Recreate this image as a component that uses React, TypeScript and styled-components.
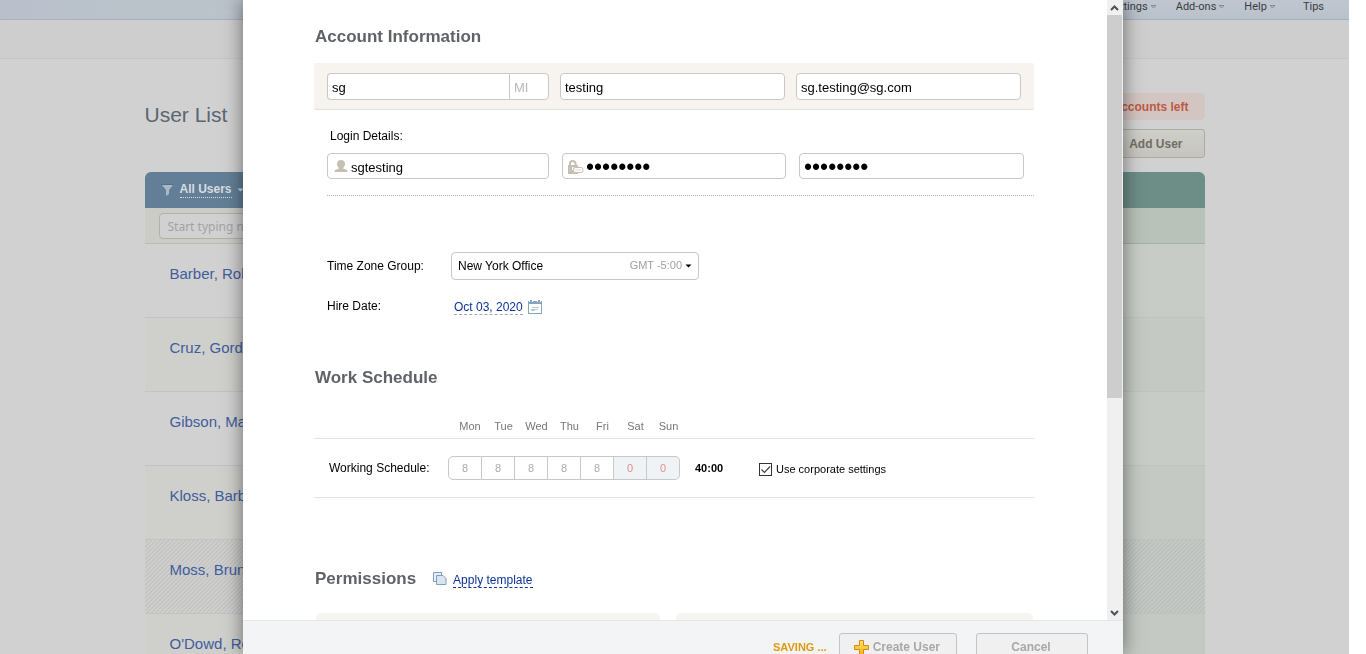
import React from 'react';
import styled, { createGlobalStyle, css } from 'styled-components';

const GlobalStyle = createGlobalStyle`
  * { box-sizing: border-box; }
  body {
    margin: 0;
    background: #fff;
    color: #000;
    font-family: "Liberation Sans", Arial, sans-serif;
    font-size: 12px;
    overflow: hidden;
  }
  input, select, button { font-family: inherit; margin: 0; }
`;

const Screen = styled.div`
  height: 100vh;
  padding-right: 17px;
  overflow: hidden;
`;

const Page = styled.div`
  min-height: 100%;
  background: #d1d1d1;
`;

const TopBar = styled.header`
  position: relative;
  height: 20px;
  border-bottom: 1px solid #a8b0c2;
  background: linear-gradient(90deg, #b9c0cc 0, #bac2ca 140px, #bac2ca 100%);
  &::before {
    content: '';
    position: absolute;
    inset: 0;
    background: linear-gradient(#c0c6d0, #b9c2cb);
    clip-path: polygon(170px 100%, 300px 0, 100% 0, 100% 100%);
  }
`;

const TopNav = styled.nav`
  position: relative;
  display: flex;
  justify-content: flex-end;
  gap: 17px;
  padding-right: 25px;
`;

const NavLink = styled.a<{ $last?: boolean }>`
  display: flex;
  align-items: center;
  gap: 3px;
  height: 13px;
  margin-left: ${p => (p.$last ? '11px' : '3px')};
  color: #3a3d40;
  font: 11px/13px Roboto, sans-serif;
  text-decoration: none;
`;

const SubBar = styled.div`
  height: 39px;
  background: #cecece;
  border-bottom: 1px solid #c6c6c6;
`;

const PageInner = styled.main`
  width: 1060px;
  margin: 0 auto;
`;

const PageHead = styled.div`
  display: flex;
  justify-content: space-between;
  height: 113px;
  padding-top: 34px;
`;

const PageTitle = styled.h1`
  margin: 10px 0 0;
  color: #5b6673;
  font-size: 21px;
  font-weight: normal;
  line-height: 24px;
`;

const HeadActions = styled.div`
  display: flex;
  flex-direction: column;
  align-items: flex-end;
  gap: 9px;
`;

const AccountsNote = styled.div`
  height: 27px;
  padding: 0 16px;
  border-radius: 5px;
  background: #d3c5c1;
  color: #bd5a45;
  font-weight: bold;
  line-height: 29px;
`;

const AddUserButton = styled.button`
  display: flex;
  align-items: center;
  gap: 7px;
  height: 29px;
  padding: 0 21px 0 16px;
  border: 1px solid #aeac9e;
  border-radius: 3px;
  background: linear-gradient(#cfcfcb, #c5c4bd);
  color: #736d62;
  font-size: 12px;
  font-weight: bold;
`;

const UserTable = styled.table`
  width: 100%;
  table-layout: fixed;
  border-spacing: 0;
  th, td { padding: 0; text-align: left; vertical-align: top; }
`;

const HeadCell = styled.th<{ $side: 'left' | 'right' }>`
  height: 36px;
  ${p =>
    p.$side === 'left'
      ? css`background: #637f97; border-radius: 6px 0 0 0;`
      : css`background: #6d8d87; border-radius: 0 6px 0 0;`}
`;

const FilterButton = styled.button`
  display: flex;
  align-items: center;
  gap: 5px;
  height: 36px;
  padding: 0 0 0 16px;
  border: 0;
  background: none;
  color: #d9dde0;
  font-size: 12px;
  font-weight: bold;
  line-height: 15px;
  span { border-bottom: 1px dotted #d9dde0; }
`;

const SearchCell = styled.td<{ $side: 'left' | 'right' }>`
  height: 36px;
  border-bottom: 1px solid ${p => (p.$side === 'left' ? '#b9bab9' : '#a4b0a8')};
  background: ${p => (p.$side === 'left' ? '#cbcbc8' : '#b8c2b8')};
`;

const SearchInput = styled.input`
  display: block;
  width: 240px;
  height: 26px;
  margin: 5px 0 0 14px;
  padding: 0 8px;
  border: 1px solid #b3b1a2;
  border-radius: 4px;
  background: #d1d1d1;
  font: 12px "Noto Sans", sans-serif;
  &::placeholder { color: #a3a3a3; opacity: 1; }
`;

const stripes = (a: string, b: string) =>
  `repeating-linear-gradient(135deg, ${a} 0, ${a} 1px, ${b} 2px, ${a} 3px)`;

const NameCell = styled.td<{ $alt: boolean; $striped?: boolean }>`
  height: 74px;
  border-bottom: 1px solid #c2c3c6;
  background: ${p => (p.$striped ? stripes('#cfcfce', '#bfbfbf') : p.$alt ? '#cfcfcc' : '#d1d1d1')};
`;

const DetailCell = styled(NameCell)`
  border-color: #bcc3c5;
  background: ${p => (p.$striped ? stripes('#c5c9c5', '#b7bcb8') : p.$alt ? '#c5c9c3' : '#c8ccc6')};
`;

const UserLink = styled.a`
  display: inline-block;
  padding: 21px 0 0 25px;
  color: #405d9c;
  font-size: 15px;
  line-height: 18px;
  text-decoration: none;
`;

const Dialog = styled.section`
  position: fixed;
  top: 0;
  bottom: 0;
  left: 50%;
  display: flex;
  flex-direction: column;
  width: 880px;
  margin-left: -440px;
  background: #fff;
  box-shadow: 0 0 18px rgba(0, 0, 0, 0.5);
`;

const DialogMain = styled.div`
  display: flex;
  flex: 1;
  min-height: 0;
`;

const DialogBody = styled.form`
  flex: 1;
  padding: 27px 73px 0 71px;
  overflow: hidden;
`;

const ScrollTrack = styled.div`
  display: flex;
  flex-direction: column;
  width: 16px;
  padding-right: 1px;
  background: #f0f0f0;
`;

const ScrollButton = styled.button`
  display: flex;
  align-items: center;
  justify-content: center;
  height: 15px;
  padding: 0;
  border: 0;
  background: none;
`;

const ScrollThumb = styled.div`
  height: 383px;
  margin-bottom: auto;
  background: #cdcdcd;
`;

const SectionTitle = styled.h2`
  margin: 0;
  padding-left: 1px;
  color: #5f6369;
  font-size: 17px;
  line-height: 20px;
`;

const NamePanel = styled.div`
  display: grid;
  grid-template-columns: 222px 1fr 1fr;
  gap: 11px;
  margin-top: 16px;
  padding: 10px 13px 9px;
  border-bottom: 1px solid #e3e1de;
  border-radius: 2px;
  background: #f7f4ef;
`;

const TextField = styled.input`
  width: 100%;
  height: 27px;
  padding: 2px 4px 0;
  border: 1px solid #c8c8c8;
  border-radius: 4px;
  background: #fff;
  color: #000;
  font-size: 13px;
  outline: 0;
  &::placeholder { color: #b9b9b9; opacity: 1; }
`;

const JoinedFields = styled.div`
  display: flex;
  ${TextField}:first-child { border-radius: 4px 0 0 4px; border-right: 0; }
  ${TextField}:last-child { width: 40px; flex: none; border-radius: 0 4px 4px 0; }
`;

const LoginBlock = styled.fieldset`
  min-width: 0;
  margin: 18px 0 0 13px;
  padding: 0 0 16px;
  border: 0;
  border-bottom: 1px dotted #b5b5b5;
`;

const LoginLegend = styled.legend`
  margin-bottom: 9px;
  padding: 0 3px;
  line-height: 16px;
`;

const LoginRow = styled.div`
  display: grid;
  grid-template-columns: 222px 224px 1fr;
  gap: 13px;
  margin-right: 10px;
`;

const SecretField = styled(TextField)`
  height: 26px;
  font-size: 23px;
`;

const IconField = styled.label`
  position: relative;
  display: block;
  height: 26px;
  svg { position: absolute; left: 5px; top: 5px; }
  ${TextField} { height: 26px; padding-left: 23px; }
`;

const FieldRow = styled.div<{ $first?: boolean }>`
  display: grid;
  grid-template-columns: 124px 1fr;
  align-items: center;
  margin: ${p => (p.$first ? '56px' : '12px')} 0 0 13px;
  min-height: 28px;
`;

const ZonePicker = styled.div`
  position: relative;
  width: 248px;
`;

const ZoneSelect = styled.select`
  width: 100%;
  height: 28px;
  padding: 0 6px 1px;
  border: 1px solid #c8c8c8;
  border-radius: 4px;
  appearance: none;
  background: #fff;
  color: #000;
  font-size: 12px;
`;

const ZoneHint = styled.span`
  position: absolute;
  right: 7px;
  top: 7px;
  display: flex;
  align-items: center;
  gap: 3px;
  color: #a0a0a0;
  font-size: 11px;
  line-height: 13px;
  pointer-events: none;
`;

const DateRow = styled.div`
  display: flex;
  align-items: center;
  gap: 5px;
  padding: 2px 0 0 3px;
`;

const DashedLink = styled.a<{ $muted?: boolean }>`
  border-bottom: 1px dashed ${p => (p.$muted ? '#a5a5a5' : '#0b3399')};
  color: #0b3399;
  line-height: 14px;
  text-decoration: none;
`;

const ScheduleTitle = styled(SectionTitle)`
  margin-top: 48px;
`;

const Schedule = styled.table`
  width: 100%;
  margin-top: 26px;
  table-layout: fixed;
  border-spacing: 0;
  th, td { padding: 0; border-bottom: 1px solid #e4e4e4; }
  thead th {
    height: 25px;
    padding: 0 0 1px 10px;
    color: #777;
    font-size: 11px;
    font-weight: normal;
    white-space: nowrap;
  }
  tbody tr > * { height: 59px; }
`;

const ScheduleLabel = styled.th`
  text-align: left;
  font-weight: normal;
  text-indent: 15px;
`;

const HourInput = styled.input<{ $off?: boolean; $first?: boolean; $last?: boolean }>`
  display: block;
  width: 100%;
  height: 24px;
  padding: 0;
  border: 1px solid #c8c8c8;
  border-left-width: ${p => (p.$first ? 1 : 0)}px;
  border-radius: ${p => (p.$first ? '5px 0 0 5px' : p.$last ? '0 5px 5px 0' : '0')};
  background: ${p => (p.$off ? '#f0f3f6' : '#fff')};
  color: ${p => (p.$off ? '#dd9090' : '#acacac')};
  font-size: 11px;
  text-align: center;
`;

const Total = styled.td`
  text-indent: 15px;
  font-size: 11px;
  font-weight: bold;
`;

const CheckLabel = styled.label`
  position: relative;
  display: flex;
  align-items: center;
  gap: 4px;
  padding-top: 2px;
  font-size: 11px;
  svg { position: absolute; left: 0; pointer-events: none; }
`;

const CheckBox = styled.input`
  width: 13px;
  height: 13px;
  appearance: none;
  border: 1px solid #333;
  background: #fff;
`;

const PermissionsHead = styled.div`
  display: flex;
  align-items: center;
  margin-top: 71px;
  svg { margin: 0 6px 0 17px; }
  a { margin-top: 3px; }
`;

const Cards = styled.div`
  display: grid;
  grid-template-columns: 344px 357px;
  gap: 16px;
  margin: 24px 0 0 2px;
`;

const Card = styled.div`
  height: 120px;
  border-radius: 5px;
  background: #f7f5f1;
`;

const DialogFooter = styled.footer`
  display: flex;
  align-items: flex-start;
  justify-content: flex-end;
  height: 34px;
  padding: 12px 35px 0 0;
  overflow: hidden;
  border-top: 1px solid #e4e6e8;
  background: #f3f4f6;
`;

const Saving = styled.span`
  margin-right: 12px;
  color: #e09a12;
  font-size: 11px;
  font-weight: bold;
  line-height: 28px;
`;

const FooterButton = styled.button`
  display: flex;
  flex: none;
  align-items: center;
  justify-content: center;
  gap: 4px;
  min-width: 112px;
  height: 28px;
  padding: 0 16px 0 14px;
  border: 1px solid #c4c4c4;
  border-radius: 3px;
  background: #f0f0f0;
  color: #a8a8a8;
  font-size: 12px;
  font-weight: bold;
  & + & { margin-left: 19px; }
`;

const Caret = ({ color }: { color: string }) => (
  <svg width="7" height="4" viewBox="0 0 7 4"><path d="M0.5 0.5h6L3.5 3.5z" fill={color} /></svg>
);
const NavCaret = () => (
  <svg width="5" height="4" viewBox="0 0 5 4"><path d="M0 .5h5M.5 1l2 2 2-2" fill="none" stroke="#85898e" /></svg>
);
const Funnel = () => (
  <svg width="14" height="12" viewBox="0 0 14 12">
    <path d="M0 .5h13" stroke="#557088" />
    <path d="M1 1h11L8 6v4l-3 2V6z" fill="#a9b8c4" />
  </svg>
);
const PersonIcon = () => (
  <svg width="18" height="16" viewBox="0 0 18 16">
    <path d="M9 2c2.600 0 4 1.500 4 4 0 1.700-.8 3-1.700 3.800v1l3.200 1c.6.2.9.8.9 2.300H2.700c0-1.500.3-2.100.9-2.300l3.100-1v-1C5.800 9 5 7.700 5 6c0-2.500 1.400-4 4-4z" fill="#c6c0b4" />
  </svg>
);
const LockIcon = () => (
  <svg width="18" height="17" viewBox="0 0 18 17">
    <path d="M3 8V5.500C3 3.500 4.200 3 5.700 3s2.800.5 2.800 2.500V8" fill="none" stroke="#c6c0b4" strokeWidth="2" />
    <path d="M1 7h10v9H1z" fill="#c6c0b4" />
    <path d="M5 9h1.500v3H5z" fill="#fff" />
    <rect x="6.500" y="9.500" width="9.500" height="5" rx="2" fill="#fff" stroke="#c6c0b4" />
    <path d="M8.500 12h1m1 0h1m1 0h1" stroke="#b5ad9e" />
  </svg>
);
const CalendarIcon = () => (
  <svg width="14" height="14" viewBox="0 0 14 14">
    <rect x=".5" y="2.500" width="13" height="11" fill="#fff" stroke="#86a6c0" />
    <path d="M0 1h14v3H0z" fill="#86a6c0" />
    <path d="M1 0h1v2H1zM4 0h1v2H4zM9 0h1v2H9zM12 0h1v2h-1z" fill="#fff" />
    <path d="M2 0h2v3H2zM10 0h2v3h-2z" fill="#86a6c0" />
    <path d="M4 7.500h7M3 9.500h7M3 10.500h4" stroke="#b9cbdb" />
  </svg>
);
const CopyIcon = () => (
  <svg width="14" height="14" viewBox="0 0 14 14">
    <path d="M.5.5h8v9h-8z" fill="#e7eef4" stroke="#7d9fc0" />
    <path d="M3.500 3.500h6.500l3 3v6H3.500z" fill="#d9e5ef" stroke="#7d9fc0" />
  </svg>
);
const PlusIcon = () => (
  <svg width="15" height="15" viewBox="0 0 15 15">
    <defs>
      <linearGradient id="plus" x1="0" y1="0" x2="0" y2="1">
        <stop offset="0" stopColor="#ffe36a" /><stop offset="1" stopColor="#fbb40f" />
      </linearGradient>
    </defs>
    <path d="M5.500.5h4v5h5v4h-5v5h-4v-5h-5v-4h5z" fill="url(#plus)" stroke="#d08c16" />
  </svg>
);

const users = ['Barber, Robert', 'Cruz, Gordon', 'Gibson, Mary', 'Kloss, Barbara', 'Moss, Bruno', "O'Dowd, Rebecca"];
const week = [
  { day: 'Mon', hours: 8 }, { day: 'Tue', hours: 8 }, { day: 'Wed', hours: 8 }, { day: 'Thu', hours: 8 },
  { day: 'Fri', hours: 8 }, { day: 'Sat', hours: 0 }, { day: 'Sun', hours: 0 },
];

function UserListPage() {
  return (
    <Page>
      <TopBar>
        <TopNav>
          <NavLink href="#settings">Settings<NavCaret /></NavLink>
          <NavLink href="#addons">Add-ons<NavCaret /></NavLink>
          <NavLink href="#help">Help<NavCaret /></NavLink>
          <NavLink href="#tips" $last>Tips</NavLink>
        </TopNav>
      </TopBar>
      <SubBar />
      <PageInner>
        <PageHead>
          <PageTitle>User List</PageTitle>
          <HeadActions>
            <AccountsNote>accounts left</AccountsNote>
            <AddUserButton type="button">
              <svg width="12" height="12" viewBox="0 0 12 12">
                <circle cx="6" cy="3" r="3" fill="#b98a60" /><path d="M0 12c0-4 2-5 6-5s6 1 6 5z" fill="#c07a48" />
              </svg>
              Add User
            </AddUserButton>
          </HeadActions>
        </PageHead>
        <UserTable>
          <thead>
            <tr>
              <HeadCell $side="left">
                <FilterButton type="button"><Funnel /><span>All Users</span><Caret color="#d9dde0" /></FilterButton>
              </HeadCell>
              <HeadCell $side="right" />
            </tr>
          </thead>
          <tbody>
            <tr>
              <SearchCell $side="left"><SearchInput aria-label="Search users" placeholder="Start typing name" /></SearchCell>
              <SearchCell $side="right" />
            </tr>
            {users.map((name, i) => (
              <tr key={name}>
                <NameCell $alt={i % 2 === 1} $striped={i === 4}><UserLink href="#user">{name}</UserLink></NameCell>
                <DetailCell $alt={i % 2 === 1} $striped={i === 4} />
              </tr>
            ))}
          </tbody>
        </UserTable>
      </PageInner>
    </Page>
  );
}

function ScheduleTable() {
  return (
    <Schedule>
      <colgroup>
        <col width={134} />
        {week.map((d, i) => <col key={d.day} width={i === 0 ? 34 : 33} />)}
        <col width={79} />
        <col />
      </colgroup>
      <thead>
        <tr>
          <th />
          {week.map(d => <th key={d.day} scope="col">{d.day}</th>)}
          <th /><th />
        </tr>
      </thead>
      <tbody>
        <tr>
          <ScheduleLabel scope="row">Working Schedule:</ScheduleLabel>
          {week.map((d, i) => (
            <td key={d.day}>
              <HourInput aria-label={d.day} defaultValue={d.hours} $off={i > 4} $first={i === 0} $last={i === 6} />
            </td>
          ))}
          <Total>40:00</Total>
          <td>
            <CheckLabel>
              <CheckBox type="checkbox" defaultChecked />
              <svg width="13" height="13" viewBox="0 0 13 13"><path d="M2.500 6.500l3 3 5.500-6" fill="none" stroke="#444" strokeWidth="1.200" /></svg>
              Use corporate settings
            </CheckLabel>
          </td>
        </tr>
      </tbody>
    </Schedule>
  );
}

function CreateUserDialog() {
  return (
    <Dialog role="dialog" aria-label="Create user">
      <DialogMain>
        <DialogBody>
          <SectionTitle>Account Information</SectionTitle>
          <NamePanel>
            <JoinedFields>
              <TextField aria-label="First name" defaultValue="sg" />
              <TextField aria-label="Middle initial" placeholder="MI" />
            </JoinedFields>
            <TextField aria-label="Last name" defaultValue="testing" />
            <TextField aria-label="Email" type="email" defaultValue="sg.testing@sg.com" />
          </NamePanel>
          <LoginBlock>
            <LoginLegend>Login Details:</LoginLegend>
            <LoginRow>
              <IconField><PersonIcon /><TextField aria-label="Username" defaultValue="sgtesting" /></IconField>
              <IconField><LockIcon /><SecretField aria-label="Password" type="password" defaultValue="password" /></IconField>
              <SecretField aria-label="Repeat password" type="password" defaultValue="password" />
            </LoginRow>
          </LoginBlock>
          <FieldRow $first>
            <label htmlFor="zone">Time Zone Group:</label>
            <ZonePicker>
              <ZoneSelect id="zone"><option>New York Office</option></ZoneSelect>
              <ZoneHint>GMT -5:00<Caret color="#000" /></ZoneHint>
            </ZonePicker>
          </FieldRow>
          <FieldRow>
            <span>Hire Date:</span>
            <DateRow><DashedLink href="#date" $muted>Oct 03, 2020</DashedLink><CalendarIcon /></DateRow>
          </FieldRow>
          <ScheduleTitle>Work Schedule</ScheduleTitle>
          <ScheduleTable />
          <PermissionsHead>
            <SectionTitle>Permissions</SectionTitle>
            <CopyIcon />
            <DashedLink href="#template">Apply template</DashedLink>
          </PermissionsHead>
          <Cards><Card /><Card /></Cards>
        </DialogBody>
        <ScrollTrack>
          <ScrollButton type="button" aria-label="Scroll up">
            <svg width="9" height="6" viewBox="0 0 9 6"><path d="M1 5l3.500-3.500L8 5" fill="none" stroke="#505050" strokeWidth="2" /></svg>
          </ScrollButton>
          <ScrollThumb />
          <ScrollButton type="button" aria-label="Scroll down">
            <svg width="9" height="6" viewBox="0 0 9 6"><path d="M1 1l3.500 3.500L8 1" fill="none" stroke="#505050" strokeWidth="2" /></svg>
          </ScrollButton>
        </ScrollTrack>
      </DialogMain>
      <DialogFooter>
        <Saving>SAVING ...</Saving>
        <FooterButton type="button"><PlusIcon />Create User</FooterButton>
        <FooterButton type="button">Cancel</FooterButton>
      </DialogFooter>
    </Dialog>
  );
}

export default function App() {
  return (
    <Screen>
      <GlobalStyle />
      <UserListPage />
      <CreateUserDialog />
    </Screen>
  );
}
